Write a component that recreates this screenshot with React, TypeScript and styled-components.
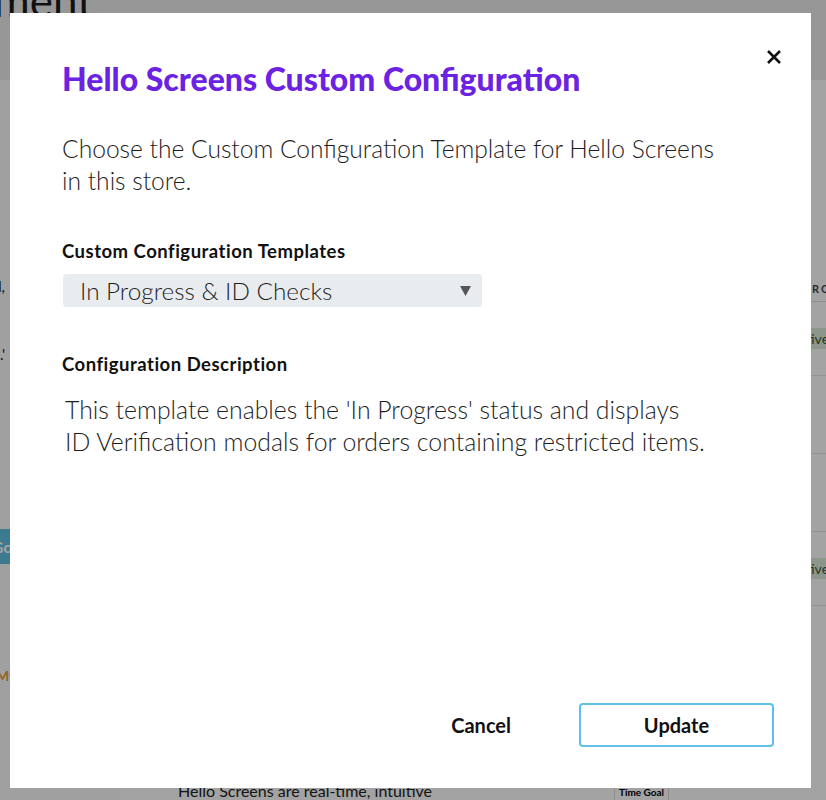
import React from "react";
import styled, { createGlobalStyle } from "styled-components";

const Global = createGlobalStyle`
  html, body { margin: 0; padding: 0; overflow: hidden; }
  body { font-family: Lato, "Noto Sans", sans-serif; background: #ffffff; }
  * { box-sizing: border-box; }
`;

/* ---------- background page ---------- */
const Page = styled.div`
  width: 826px;
  height: 800px;
  display: flex;
  flex-direction: column;
  overflow: hidden;
`;

const Header = styled.header`
  height: 80px;
  flex: none;
  background: #ececee;
  display: flex;
`;

const TitleCell = styled.div`
  width: 93px;
  display: flex;
  justify-content: flex-end;
  white-space: nowrap;
`;

const PageTitle = styled.h1`
  margin: -20px 0 0;
  font-size: 44px;
  font-weight: 400;
  color: #1b1b1b;
  line-height: 40px;
`;

const Body = styled.div`
  flex: 1;
  display: grid;
  grid-template-columns: 120px 1fr 26px;
  background: #ffffff;
`;

const LeftCol = styled.div`
  display: flex;
  flex-direction: column;
  padding-top: 196px;
  background: #fbfbfb;
  font-size: 15px;
  color: #222;
`;

const LeftLine = styled.div<{ $gap?: number }>`
  width: 5px;
  display: flex;
  justify-content: flex-end;
  white-space: nowrap;
  margin-bottom: ${(p) => p.$gap ?? 0}px;
  line-height: 20px;
`;

const BlueTab = styled.div`
  height: 35px;
  margin-left: -60px;
  width: 72px;
  background: #5fc1e0;
  color: #fff;
  font-weight: 700;
  display: flex;
  align-items: center;
  justify-content: flex-end;
  margin-bottom: 103px;
`;

const OrangeText = styled.div`
  color: #e79b3a;
  font-weight: 700;
  font-size: 14px;
  margin-left: -4px;
`;

const Center = styled.div`
  display: flex;
  flex-direction: column;
  justify-content: flex-end;
`;

const BottomRow = styled.div`
  display: grid;
  grid-template-columns: 58px 436px 55px 1fr;
  height: 24px;
  align-items: end;
`;

const BottomText = styled.div`
  grid-column: 2;
  font-size: 16px;
  color: #222;
  white-space: nowrap;
  line-height: 18px;
`;

const GoalCell = styled.div`
  grid-column: 3;
  border-left: 1px solid #ddd;
  border-right: 1px solid #ddd;
  height: 24px;
  font-size: 10px;
  font-weight: 700;
  display: flex;
  align-items: flex-end;
  justify-content: center;
  padding-bottom: 2px;
  white-space: nowrap;
`;

const RightCol = styled.div`
  width: 200px;
  padding-top: 196px;
  display: flex;
  flex-direction: column;
`;

const TableHead = styled.div`
  height: 26px;
  font-size: 11px;
  font-weight: 700;
  letter-spacing: 2px;
  color: #444;
  padding-left: 12px;
  border-bottom: 1px solid #ddd;
  display: flex;
  align-items: center;
`;

const TableRow = styled.div<{ $h: number }>`
  height: ${(p) => p.$h}px;
  border-bottom: 1px solid #e6e6e6;
  display: flex;
  align-items: center;
`;

const Badge = styled.span`
  margin-left: -18px;
  background: #dcebd8;
  color: #3a5a3a;
  font-size: 14px;
  padding: 2px 8px;
`;

/* ---------- modal ---------- */
const Overlay = styled.div`
  position: fixed;
  inset: 0;
  background: rgba(0, 0, 0, 0.36);
  padding: 13px 15px 12px 10px;
  display: flex;
`;

const Modal = styled.div`
  position: relative;
  flex: 1;
  background: #ffffff;
  display: flex;
  flex-direction: column;
  padding: 45px 37px 41px 52px;
  color: #1c1c1c;
`;

const CloseButton = styled.button`
  position: absolute;
  top: 32px;
  right: 25px;
  width: 24px;
  height: 24px;
  border: none;
  background: none;
  padding: 0;
  display: flex;
  align-items: center;
  justify-content: center;
  cursor: pointer;
`;

const Title = styled.h2`
  margin: 0;
  font-size: 32px;
  line-height: 42px;
  font-weight: 900;
  color: #6c22e2;
`;

const Intro = styled.p`
  margin: 33px 0 0;
  font-size: 24.6px;
  line-height: 32px;
  font-weight: 300;
  color: #1e1e1e;
`;

const FieldLabel = styled.div<{ $top: number }>`
  margin-top: ${(p) => p.$top}px;
  font-size: 18.5px;
  letter-spacing: 0.5px;
  line-height: 22px;
  font-weight: 700;
  color: #111;
`;

const SelectBox = styled.div`
  margin-top: 12px;
  margin-left: 1px;
  width: 419px;
  height: 33px;
  background: #e9ecef;
  border-radius: 4px;
  display: flex;
  align-items: center;
  justify-content: space-between;
  padding: 0 11px 0 17px;
  font-size: 24.3px;
  font-weight: 300;
  color: #1e1e1e;
`;

const Description = styled.p`
  margin: 19px 0 0 3px;
  font-size: 24.8px;
  line-height: 32px;
  font-weight: 300;
  color: #1e1e1e;
`;

const Footer = styled.div`
  margin-top: auto;
  display: flex;
  justify-content: flex-end;
  align-items: center;
  gap: 68px;
`;

const TextButton = styled.button`
  border: none;
  background: none;
  font-family: inherit;
  font-size: 20px;
  font-weight: 700;
  color: #111;
  padding: 0;
  cursor: pointer;
`;

const OutlineButton = styled.button`
  width: 195px;
  height: 44px;
  border: 2px solid #5fc1e6;
  border-radius: 4px;
  background: #ffffff;
  font-family: inherit;
  font-size: 20px;
  font-weight: 700;
  color: #111;
  cursor: pointer;
`;

export default function App() {
  return (
    <>
      <Global />
      <Page>
        <Header>
          <TitleCell>
            <PageTitle>Store Management</PageTitle>
          </TitleCell>
        </Header>
        <Body>
          <LeftCol>
            <LeftLine $gap={48}>
              <span>Enabled,</span>
            </LeftLine>
            <LeftLine $gap={165}>
              <span>Screens.'</span>
            </LeftLine>
            <BlueTab>Go</BlueTab>
            <OrangeText>My Store</OrangeText>
          </LeftCol>
          <Center>
            <BottomRow>
              <BottomText>Hello Screens are real-time, intuitive</BottomText>
              <GoalCell>Time Goal</GoalCell>
            </BottomRow>
          </Center>
          <RightCol>
            <TableHead>ROLE</TableHead>
            <TableRow $h={74}>
              <Badge>Active</Badge>
            </TableRow>
            <TableRow $h={78} />
            <TableRow $h={78} />
            <TableRow $h={74}>
              <Badge>Active</Badge>
            </TableRow>
          </RightCol>
        </Body>
      </Page>
      <Overlay>
        <Modal role="dialog">
          <CloseButton aria-label="Close">
            <svg width="16" height="16" viewBox="0 0 16 16">
              <path d="M2 2 L14 14 M14 2 L2 14" stroke="#111" strokeWidth="2.6" strokeLinecap="butt" />
            </svg>
          </CloseButton>
          <Title>Hello Screens Custom Configuration</Title>
          <Intro>
            Choose the Custom Configuration Template for Hello Screens
            <br />
            in this store.
          </Intro>
          <FieldLabel $top={43}>Custom Configuration Templates</FieldLabel>
          <SelectBox>
            <span>In Progress &amp; ID Checks</span>
            <svg width="11" height="10" viewBox="0 0 11 10">
              <path d="M0 0 H11 L5.5 10 Z" fill="#555" />
            </svg>
          </SelectBox>
          <FieldLabel $top={46}>Configuration Description</FieldLabel>
          <Description>
            This template enables the 'In Progress' status and displays
            <br />
            ID Verification modals for orders containing restricted items.
          </Description>
          <Footer>
            <TextButton>Cancel</TextButton>
            <OutlineButton>Update</OutlineButton>
          </Footer>
        </Modal>
      </Overlay>
    </>
  );
}
